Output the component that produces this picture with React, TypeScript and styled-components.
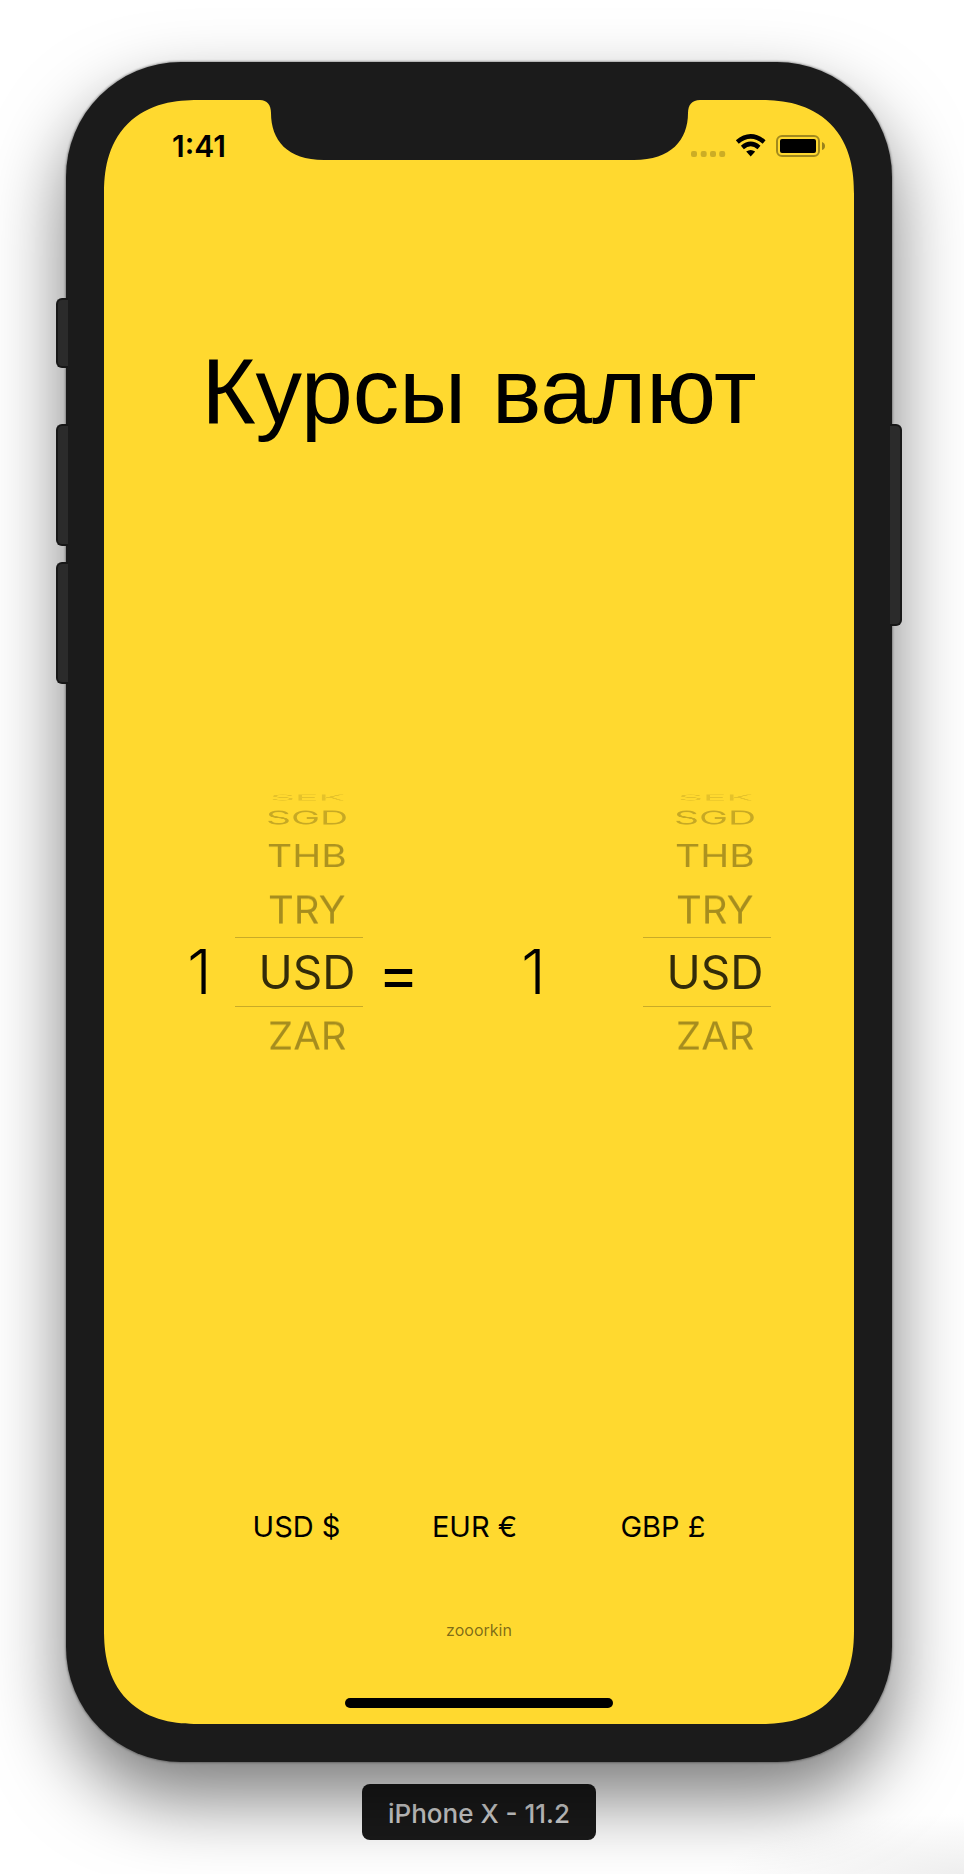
import React, { useState } from "react";
import styled, { createGlobalStyle } from "styled-components";

const GlobalStyle = createGlobalStyle`
  *, *::before, *::after { box-sizing: border-box; }
  body {
    margin: 0;
    background: #fff;
    color: #000;
    font-family: Inter, "Liberation Sans", sans-serif;
  }
`;

const Page = styled.div`
  display: flex;
  flex-direction: column;
  align-items: center;
  gap: 22px;
  padding: 62px 72px 34px 66px;
  background: radial-gradient(ellipse 240px 60px at 100% 100%, #eee, #fff);
`;

const Phone = styled.div`
  position: relative;
  width: 100%;
  padding: 38px;
  border-radius: 115px;
  background: #1b1b1b;
  box-shadow: 0 0 2px 1px rgba(0, 0, 0, 0.3), 0 36px 76px rgba(0, 0, 0, 0.52);
`;

const SideKey = styled.span<{ $side: "left" | "right"; $top: number; $length: number }>`
  position: absolute;
  top: ${(p) => p.$top}px;
  ${(p) => p.$side}: -10px;
  width: 12px;
  height: ${(p) => p.$length}px;
  border: 2px solid #171717;
  border-${(p) => (p.$side === "left" ? "right" : "left")}: 0;
  border-radius: ${(p) => (p.$side === "left" ? "6px 0 0 6px" : "0 6px 6px 0")};
  background: #2b2b2b;
`;

const Screen = styled.main`
  display: flex;
  flex-direction: column;
  align-items: center;
  padding-bottom: 16px;
  border-radius: 82px;
  background: #ffd92f;
  overflow: hidden;

  @supports (corner-shape: superellipse(1.25)) {
    border-radius: 94px;
    corner-shape: superellipse(1.25);
  }
`;

const StatusBar = styled.header`
  display: grid;
  grid-template-columns: 1fr 418px 1fr;
  width: 100%;
  height: 60px;
`;

const Clock = styled.time`
  padding: 28px 0 0 68px;
  font-size: 30px;
  line-height: 36px;
  font-weight: 600;
`;

const Notch = styled.svg`
  display: block;
  overflow: visible;
`;

const Indicators = styled.div`
  display: flex;
  justify-content: flex-end;
  padding: 34px 29px 0 0;

  svg { flex: none; }
`;

const Title = styled.h1`
  margin: 175px 0 342px;
  font-family: "Liberation Sans", sans-serif;
  font-size: 93px;
  line-height: 112px;
  font-weight: 400;
  white-space: nowrap;
`;

const Converter = styled.form`
  display: grid;
  grid-template-columns: 131fr 128px 71fr 209fr 128px 83fr;
  width: 100%;
`;

const Amount = styled.input`
  width: 100%;
  height: 70px;
  margin-top: 148px;
  padding: 0 0 0 60px;
  border: 0;
  background: none;
  color: #000;
  font: 300 62px/70px Inter, "Liberation Sans", sans-serif;
  text-align: center;
`;

const Equals = styled.span`
  margin-top: 148px;
  font-size: 62px;
  line-height: 74px;
  text-align: center;
`;

const Result = styled.output`
  margin-top: 148px;
  padding-right: 10px;
  font-size: 62px;
  line-height: 70px;
  font-weight: 300;
  text-align: center;
`;

const Wheel = styled.fieldset`
  min-width: 0;
  margin: 0;
  padding: 0;
  border: 0;
  overflow: hidden;
`;

const WheelItem = styled.label<{ $height: number; $tilt: number; $alpha: number; $clip?: boolean }>`
  display: flex;
  justify-content: center;
  align-items: center;
  height: ${(p) => p.$height}px;
  padding-left: 16px;
  color: rgba(0, 0, 0, ${(p) => p.$alpha});
  font-size: ${(p) => (p.$tilt > 30 ? 39 : 40)}px;
  overflow: ${(p) => (p.$clip ? "hidden" : "visible")};
  cursor: pointer;

  span { transform: rotateX(${(p) => p.$tilt}deg); }
`;

const SelectedItem = styled(WheelItem)`
  border-top: 1px solid #c9ab27;
  border-bottom: 1px solid #c9ab27;
  font-size: 46px;
`;

const HiddenRadio = styled.input`
  position: absolute;
  opacity: 0;
  pointer-events: none;
`;

const QuickRow = styled.nav`
  display: grid;
  grid-template-columns: 177fr 179fr 198fr;
  width: 100%;
  margin-top: 444px;
  padding: 0 92px 0 104px;
`;

const QuickButton = styled.button`
  padding: 0;
  border: 0;
  background: none;
  color: #000;
  font: 400 29px/40px Inter, "Liberation Sans", sans-serif;
  white-space: nowrap;
  cursor: pointer;
`;

const Author = styled.p`
  margin: 73px 0 58px;
  color: rgba(0, 0, 0, 0.52);
  font-size: 16px;
  line-height: 20px;
`;

const HomeBar = styled.div`
  width: 268px;
  height: 10px;
  border-radius: 5px;
  background: #000;
`;

const DeviceLabel = styled.div`
  padding: 4px 26px 0;
  border-radius: 8px;
  background: #1a1a1a;
  box-shadow: 0 0 0 2px rgba(255, 255, 255, 0.3);
  color: #d6d6d6;
  font-size: 26px;
  line-height: 52px;
  font-weight: 500;
  white-space: nowrap;
`;

const wheelRows = [
  { code: "SEK", height: 16, tilt: 78, alpha: 0.1 },
  { code: "SGD", height: 24, tilt: 61, alpha: 0.22 },
  { code: "THB", height: 52, tilt: 38, alpha: 0.32 },
  { code: "TRY", height: 56, tilt: 15, alpha: 0.35 },
  { code: "USD", height: 70, tilt: 0, alpha: 0.8 },
  { code: "ZAR", height: 56, tilt: 15, alpha: 0.35 },
];

function CurrencyWheel({ name, label }: { name: string; label: string }) {
  const [value, setValue] = useState("USD");
  return (
    <Wheel aria-label={label}>
      {wheelRows.map((row) => {
        const Item = row.code === "USD" ? SelectedItem : WheelItem;
        return (
          <Item
            key={row.code}
            $height={row.height}
            $tilt={row.tilt}
            $alpha={row.alpha}
            $clip={row.code === "SEK"}
          >
            <HiddenRadio
              type="radio"
              name={name}
              checked={value === row.code}
              onChange={() => setValue(row.code)}
            />
            <span>{row.code}</span>
          </Item>
        );
      })}
    </Wheel>
  );
}

export default function App() {
  const [amount, setAmount] = useState("1");
  return (
    <>
      <GlobalStyle />
      <Page>
        <Phone>
          <SideKey $side="left" $top={236} $length={70} />
          <SideKey $side="left" $top={362} $length={122} />
          <SideKey $side="left" $top={500} $length={122} />
          <SideKey $side="right" $top={362} $length={202} />
          <Screen>
            <StatusBar>
              <Clock>1:41</Clock>
              <Notch width="418" height="60" viewBox="0 0 418 60" aria-hidden="true">
                <path
                  d="M-12 -1V0H-10C-3 0 1 5 1 13C1 40 17 60 54 60H364C401 60 418 40 418 13C418 5 422 0 430 0H432V-1Z"
                  fill="#1b1b1b"
                />
              </Notch>
              <Indicators>
                <svg width="134" height="24" viewBox="0 0 134 24" aria-hidden="true">
                  <g fill="#000" fillOpacity="0.2">
                    <rect x="0" y="17" width="6" height="6" rx="2" />
                    <rect x="9.7" y="17" width="6" height="6" rx="2" />
                    <rect x="19" y="17" width="6" height="6" rx="2" />
                    <rect x="28.2" y="17" width="6" height="6" rx="2" />
                  </g>
                  <path d="M46.3 8Q59.7 -3.2 73.1 8" fill="none" stroke="#000" strokeWidth="4.6" />
                  <path d="M51.4 13.4Q59.7 6.4 68 13.4" fill="none" stroke="#000" strokeWidth="4.6" />
                  <path d="M55.2 17.6Q59.7 14.4 64.2 17.6L59.7 22.5Z" />
                  <rect x="86" y="2" width="42" height="20" rx="5" fill="none" stroke="#000" strokeOpacity="0.37" strokeWidth="2" />
                  <rect x="89" y="5" width="36" height="14" rx="2" />
                  <path d="M131 8Q134 9 134 12T131 16Z" fillOpacity="0.4" />
                </svg>
              </Indicators>
            </StatusBar>
            <Title>Курсы валют</Title>
            <Converter onSubmit={(e) => e.preventDefault()}>
              <Amount aria-label="Сумма" value={amount} onChange={(e) => setAmount(e.target.value)} />
              <CurrencyWheel name="from" label="Из валюты" />
              <Equals>=</Equals>
              <Result>{amount}</Result>
              <CurrencyWheel name="to" label="В валюту" />
            </Converter>
            <QuickRow>
              <QuickButton type="button">USD $</QuickButton>
              <QuickButton type="button">EUR €</QuickButton>
              <QuickButton type="button">GBP £</QuickButton>
            </QuickRow>
            <Author>zooorkin</Author>
            <HomeBar />
          </Screen>
        </Phone>
        <DeviceLabel>iPhone X - 11.2</DeviceLabel>
      </Page>
    </>
  );
}
